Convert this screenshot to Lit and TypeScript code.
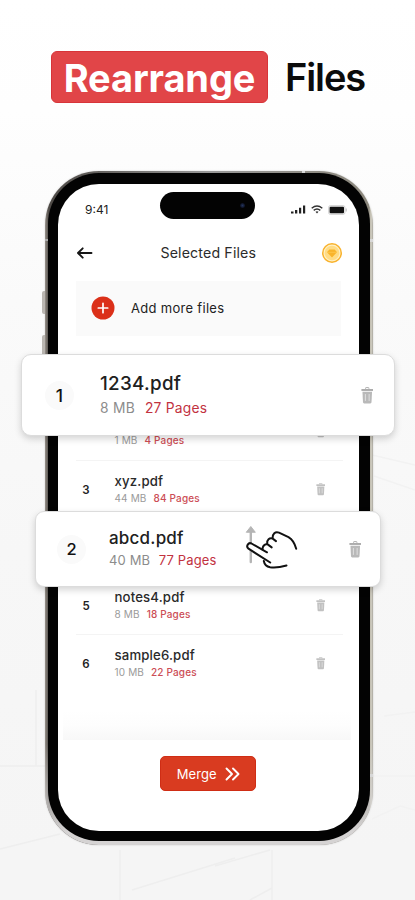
import { LitElement, html, css, svg } from "lit";
import { customElement, property } from "lit/decorators.js";

interface FileEntry {
  index: string;
  name: string;
  size: string;
  pages: string;
}

const FILES: FileEntry[] = [
  { index: "2", name: "", size: "1 MB", pages: "4 Pages" },
  { index: "3", name: "xyz.pdf", size: "44 MB", pages: "84 Pages" },
  { index: "", name: "", size: "", pages: "" },
  { index: "5", name: "notes4.pdf", size: "8 MB", pages: "18 Pages" },
  { index: "6", name: "sample6.pdf", size: "10 MB", pages: "22 Pages" },
];

const trash = svg`
  <path d="M4.4 1.6V.9Q4.4 .4 4.9 .4h2.2q.5 0 .5.5v.7" fill="none" stroke="currentColor" stroke-width=".9"/>
  <path d="M.4 1.8h11.2v1.8H.4z" fill="currentColor"/>
  <path d="M1.4 4.5h9.2l-.5 10q-.1 1.1-1.2 1.1H3.1Q2 15.600 1.900 14.500z" fill="currentColor" opacity=".82"/>
  <path d="M4.200 6.600v6.600M7.800 6.600v6.600" stroke="#eee" stroke-width=".7" fill="none"/>
`;

@customElement("trash-icon")
class TrashIcon extends LitElement {
  static styles = css`
    :host { display: block; color: #a9a9a9; }
    svg { display: block; width: 100%; height: 100%; }
  `;
  render() {
    return html`<svg viewBox="0 0 12 16">${trash}</svg>`;
  }
}

@customElement("file-row")
class FileRow extends LitElement {
  @property({ attribute: false }) file!: FileEntry;
  static styles = css`
    :host { display: flex; height: 58px; align-items: center; border-bottom: 1px solid #f4f4f4; }
    :host(:last-of-type) { border-bottom-color: transparent; }
    .num { width: 20px; text-align: center; font-size: 11.500px; font-weight: 600; color: #222; padding-top: 1px; }
    .info { flex: 1; margin-left: 18.500px; }
    .name { height: 17px; line-height: 17px; font-size: 13.200px; letter-spacing: .15px; font-weight: 500; color: #2a2a2a; }
    .meta { display: flex; gap: 7px; height: 16px; line-height: 16px; font-size: 10px; letter-spacing: .15px; color: #9a9a9a; white-space: nowrap; }
    .pages { color: #cc4d55; font-weight: 500; }
    trash-icon { width: 9.500px; height: 12.500px; margin-right: 17.500px; color: #b3b3b3; }
  `;
  render() {
    const f = this.file;
    if (!f.index) return html``;
    return html`
      <div class="num">${f.index}</div>
      <div class="info">
        <div class="name">${f.name}</div>
        <div class="meta"><span>${f.size}</span><span class="pages">${f.pages}</span></div>
      </div>
      <trash-icon></trash-icon>
    `;
  }
}

@customElement("app-root")
class AppRoot extends LitElement {
  static styles = css`
    :host {
      display: block; position: relative; width: 415px; height: 900px; overflow: hidden;
      font-family: Inter, "Liberation Sans", sans-serif; color: #111;
      background: linear-gradient(#fff 0, #fefefe 110px, #fafafa 300px, #f7f7f7 550px, #f5f5f5 850px);
    }
    * { box-sizing: border-box; }
    svg { display: block; }
    .backdrop { position: absolute; inset: 0; }
    .title {
      position: relative; display: flex; align-items: center; height: 52px;
      margin: 51px 0 0 51px; gap: 17px; white-space: nowrap;
      font-size: 38px; font-weight: 600; line-height: 52px;
    }
    .tag {
      width: 217px; height: 52px; border-radius: 6px; background: #e14548; color: #fff;
      border: 1px solid #d73439; text-align: center; line-height: 52px;
      font-weight: 650; letter-spacing: -.1px;
    }
    .files { letter-spacing: -1.1px; color: #0b0b0b; line-height: 54px; }
    .phone {
      position: relative; margin: 68px 0 0 45px; width: 328px; height: 674px;
      border-radius: 54px; padding: 2px 3px 4px;
      background: linear-gradient(90deg, #9a948d 0, #6f6a65 2px, #4d4945 4px, #999 50%, #8a867b 324px, #d6d3c6 326px, #aaa79f 328px);
      box-shadow: 0 0 2px rgba(0,0,0,.18);
    }
    .phone::before {
      content: ""; position: absolute; inset: 0; border-radius: 54px;
      background: linear-gradient(180deg, transparent 85%, #d5d3d3 98%);
    }
    .side { position: absolute; width: 3px; left: -3px; background: #bab6b1; border-radius: 2px 0 0 2px; }
    .side.a { top: 120px; height: 23px; }
    .side.b { top: 164px; height: 40px; }
    .notch { position: absolute; background: #d8d8d8; }
    .notch.t { left: 257px; top: 0; width: 3px; height: 3px; }
    .notch.r { right: 0; top: 68px; width: 3px; height: 3px; }
    .notch.l { left: 0; top: 68px; width: 3px; height: 2px; background: #aaa; }
    .notch.q { right: 0; top: 603px; width: 4px; height: 3px; }
    .bezel {
      position: relative; height: 100%; border-radius: 51px; background: #030303;
      padding: 11px 11.500px 10px 10px;
    }
    .screen {
      display: flex; flex-direction: column; height: 100%; border-radius: 41px;
      background: #fff; overflow: hidden;
    }
    .status { display: flex; align-items: center; height: 35px; padding: 8px 12px 0 27px; }
    .time { width: 75.500px; font-size: 12px; font-weight: 400; color: #222; padding-top: 8px; }
    .island {
      width: 96px; height: 27px; border-radius: 14px; display: flex; align-items: center;
      justify-content: flex-end; padding-right: 10px;
      background: #030303;
    }
    .lens { width: 5px; height: 5px; border-radius: 50%; background: radial-gradient(#24345c, #080b18 80%); }
    .signals { display: flex; align-items: center; gap: 5px; margin-left: 36px; padding-top: 8px; }
    .bar { display: grid; grid-template-columns: 20px 1fr 22px; align-items: center; height: 46px; margin: 11px 16px 0 18px; }
    .heading { text-align: center; font-size: 14.200px; line-height: 20px; letter-spacing: .15px; color: #2b2b2b; white-space: nowrap; }
    .add {
      display: flex; align-items: center; height: 55px; margin: 5px 18px 0 18px; padding: 0 0 2px 14.500px;
      background: #fafafa; font-size: 13px; letter-spacing: .3px; color: #222;
    }
    .plus { margin-right: 16.500px; }
    .list { display: flex; flex-direction: column; margin: 67px 16px 0 18px; }
    .fade { height: 30px; margin: 17px 8px 0 5px; background: linear-gradient(#fff, #fdfdfd 50%, #f8f8f8); }
    .foot { display: flex; justify-content: center; padding-top: 16px; }
    .merge {
      display: flex; align-items: center; justify-content: center; gap: 8px; width: 96px; height: 35px;
      border-radius: 5px; background: #d93b20; border: 1px solid #cf2d15; color: #fff;
      font-size: 13px; letter-spacing: .1px;
    }
    .card {
      position: absolute; display: flex; align-items: center; background: #fff;
      border: 1px solid #dcdcdc; box-shadow: 0 3px 7px rgba(0,0,0,.17);
    }
    .one { left: 21px; top: 354px; width: 374px; height: 82px; border-radius: 10px; padding: 1px 21px 0 23px; }
    .two { left: 35px; top: 511px; width: 346px; height: 76px; border-radius: 9px; padding: 0 19px 0 21px; }
    .badge {
      width: 29px; height: 29px; border-radius: 50%; background: #fafafa; text-align: center;
      line-height: 29px; font-weight: 500; color: #111;
    }
    .one .badge { font-size: 17.500px; }
    .two .badge { font-size: 16.500px; }
    .body { flex: 1; white-space: nowrap; }
    .one .body { margin-left: 26px; }
    .two .body { margin-left: 23px; }
    .fname { color: #202020; font-weight: 450; }
    .one .fname { font-size: 18.800px; line-height: 24px; letter-spacing: .3px; }
    .two .fname { font-size: 17px; line-height: 22px; letter-spacing: .2px; }
    .fmeta { display: flex; color: #8c8c8c; }
    .one .fmeta { font-size: 13.800px; line-height: 24px; gap: 10px; letter-spacing: .25px; }
    .two .fmeta { font-size: 13px; line-height: 22px; gap: 8.500px; letter-spacing: .15px; }
    .fmeta .red { color: #c2323f; }
    .one trash-icon, .two trash-icon { width: 12.500px; height: 17px; }
    .hand { position: absolute; left: 208px; top: 12px; }
  `;

  private card(cls: string, index: string, name: string, size: string, pages: string, extra: unknown = "") {
    return html`
      <div class="card ${cls}">
        <div class="badge">${index}</div>
        <div class="body">
          <div class="fname">${name}</div>
          <div class="fmeta"><span>${size}</span><span class="red">${pages}</span></div>
        </div>
        <trash-icon></trash-icon>
        ${extra}
      </div>
    `;
  }

  render() {
    const hand = html`
      <svg class="hand" width="58" height="50" viewBox="244 524 58 50" fill="none" stroke-linecap="round" stroke-linejoin="round">
        <path d="M250.800 530v32" stroke="#b5b5b5" stroke-width="2.400"/>
        <path d="M246.500 532l4.300-5.500 4.300 5.500z" fill="#b5b5b5" stroke="#b5b5b5" stroke-width="1"/>
        <path d="M267 552.300l-15.500-8.800c-3-1.500-6 2.800-3 5.200l21.500 14-6.500-1.600q1.200 5.600 6.300 6.200c5.500.9 11-.2 16-1.800"
          fill="#fff"/>
        <path d="M267 552.300l-15.500-8.800c-3-1.500-6 2.800-3 5.200l21.700 13.800M263.800 561q1 5.300 6.300 6.300c5.500.9 11-.2 16.400-1.800"
          stroke="#111" stroke-width="2"/>
        <path d="M262.500 549.500q0-5 4.500-5.600l4.700 3.500M267.200 543.800c-.5-4 2.300-6.300 5.500-5.200l3.300 2.500M272.600 538.200c-.2-4 2.600-7.200 6.400-5.500l9.500 4.500c4 2.300 6.300 6.500 7.700 11.600"
          stroke="#111" stroke-width="2"/>
      </svg>`;
    return html`
      <svg class="backdrop" width="415" height="900" fill="none" stroke="#eee" stroke-width="1.500">
        <path d="M0 849L60 834M120 850V900M132 890L235 858M0 766H45M36 690V766M215 866L270 850M272 850V900M250 900L272 888"/>
        <path d="M384 716L415 712M372 819L400 806L415 810M372 776H415M372 455L415 465M374 476L415 490" stroke="#f2f2f2"/>
      </svg>

      <div class="title"><span class="tag">Rearrange</span><span class="files">Files</span></div>

      <div class="phone">
        <i class="side a"></i><i class="side b"></i>
        <i class="notch t"></i><i class="notch r"></i><i class="notch l"></i><i class="notch q"></i>
        <div class="bezel">
          <div class="screen">
            <div class="status">
              <div class="time">9:41</div>
              <div class="island"><i class="lens"></i></div>
              <div class="signals">
                <svg width="15" height="9" viewBox="0 0 15 9" fill="#222"><path d="M0 6.500h2.500v2H0zM4 5h2.300v3.500H4zM8 2.700h2.200v5.800H8zM12 .5h2.200v8H12z"/></svg>
                <svg width="12" height="9" viewBox="0 0 12 9" fill="none" stroke="#333" stroke-width="1.400"><path d="M.7 3.300Q6-1.200 11.300 3.300M2.700 5.400Q6 2.600 9.300 5.400"/><path d="M4.500 6.700Q6 5.600 7.500 6.700L6 8.500z" fill="#333" stroke="none"/></svg>
                <svg width="19" height="10" viewBox="0 0 19 10"><rect x=".5" y=".5" width="16.500" height="9" rx="2" fill="#eee" stroke="#ccc" stroke-width=".7"/><rect x="1.600" y="1.800" width="14.400" height="6.400" rx="1" fill="#111"/><path d="M18.200 3.500v3" stroke="#bbb"/></svg>
              </div>
            </div>

            <div class="bar">
              <svg width="18" height="14" viewBox="0 0 18 14" fill="none" stroke="#161616" stroke-width="1.900" stroke-linecap="round" stroke-linejoin="round"><path d="M15.500 7H2.200M6.700 2.300L2 7l4.700 4.700"/></svg>
              <div class="heading">Selected Files</div>
              <svg width="22" height="22" viewBox="0 0 22 22">
                <circle cx="11" cy="11" r="10" fill="#f9b22c"/>
                <circle cx="11" cy="11" r="7.900" fill="#ffdc85" stroke="#fff0c4" stroke-width="1.200"/>
                <path d="M8.300 7.500h5.400l2.300 2.800-5 5.200-5-5.200z" fill="#f9b42b"/>
                <path d="M6 10.300h10" stroke="#ffcc55" stroke-width=".7"/>
              </svg>
            </div>

            <div class="add">
              <svg class="plus" width="24" height="24" viewBox="0 0 24 24"><circle cx="12" cy="12" r="11.500" fill="#db3019"/><path d="M12 7.300v9.400M7.300 12h9.400" stroke="#fff" stroke-width="1.700" stroke-linecap="round"/></svg>
              <span>Add more files</span>
            </div>

            <div class="list">${FILES.map((f) => html`<file-row .file=${f}></file-row>`)}</div>
            <div class="fade"></div>
            <div class="foot">
              <div class="merge">
                <span>Merge</span>
                <svg width="15" height="14" viewBox="0 0 15 14" fill="none" stroke="#fff" stroke-width="1.900" stroke-linecap="round" stroke-linejoin="round"><path d="M1.500 1.500L7 7l-5.500 5.500M8 1.500L13.500 7 8 12.500"/></svg>
              </div>
            </div>
          </div>
        </div>
      </div>

      ${this.card("one", "1", "1234.pdf", "8 MB", "27 Pages")}
      ${this.card("two", "2", "abcd.pdf", "40 MB", "77 Pages", hand)}
    `;
  }
}
